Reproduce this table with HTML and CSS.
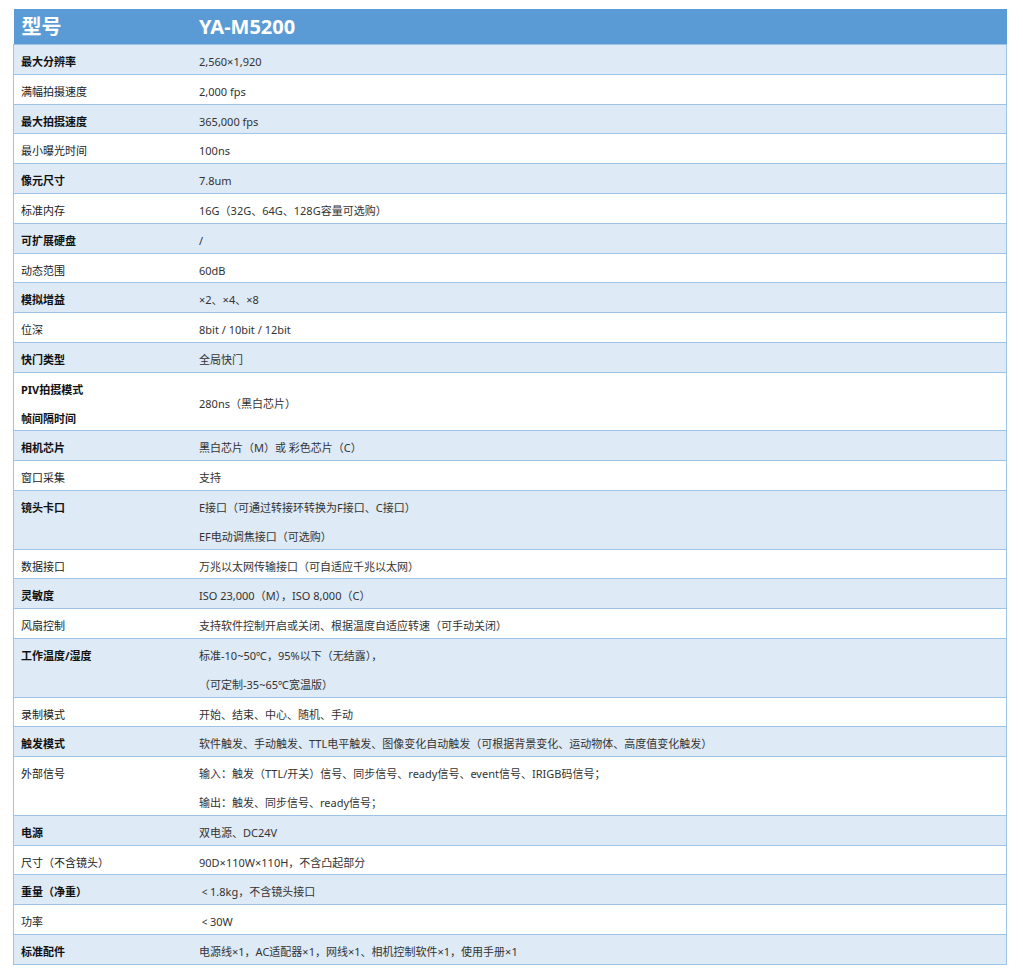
FILE: index.html
```html
<!DOCTYPE html>
<html lang="zh-CN">
<head>
<meta charset="utf-8">
<title>YA-M5200</title>
<link rel="stylesheet" href="styles.css">
</head>
<body>
<div class="page">
<table class="spec">
<thead>
<tr class="head"><th class="k">型号</th><th class="v">YA-M5200</th></tr>
</thead>
<tbody>
<tr class="alt"><td class="k b"><div class="c">最大分辨率</div></td><td class="v"><div class="c">2,560×1,920</div></td></tr>
<tr><td class="k"><div class="c">满幅拍摄速度</div></td><td class="v"><div class="c">2,000 fps</div></td></tr>
<tr class="alt"><td class="k b"><div class="c">最大拍摄速度</div></td><td class="v"><div class="c">365,000 fps</div></td></tr>
<tr><td class="k"><div class="c">最小曝光时间</div></td><td class="v"><div class="c">100ns</div></td></tr>
<tr class="alt"><td class="k b"><div class="c">像元尺寸</div></td><td class="v"><div class="c">7.8um</div></td></tr>
<tr><td class="k"><div class="c">标准内存</div></td><td class="v"><div class="c">16G（32G、64G、128G容量可选购）</div></td></tr>
<tr class="alt"><td class="k b"><div class="c">可扩展硬盘</div></td><td class="v"><div class="c">/</div></td></tr>
<tr><td class="k"><div class="c">动态范围</div></td><td class="v"><div class="c">60dB</div></td></tr>
<tr class="alt"><td class="k b"><div class="c">模拟增益</div></td><td class="v"><div class="c">×2、×4、×8</div></td></tr>
<tr><td class="k"><div class="c">位深</div></td><td class="v"><div class="c">8bit / 10bit / 12bit</div></td></tr>
<tr class="alt"><td class="k b"><div class="c">快门类型</div></td><td class="v"><div class="c">全局快门</div></td></tr>
<tr><td class="k b"><div class="c">PIV拍摄模式<br>帧间隔时间</div></td><td class="v"><div class="c">280ns（黑白芯片）</div></td></tr>
<tr class="alt"><td class="k b"><div class="c">相机芯片</div></td><td class="v"><div class="c">黑白芯片（M）或 彩色芯片（C）</div></td></tr>
<tr><td class="k"><div class="c">窗口采集</div></td><td class="v"><div class="c">支持</div></td></tr>
<tr class="alt"><td class="k b"><div class="c">镜头卡口</div></td><td class="v"><div class="c">E接口（可通过转接环转换为F接口、C接口）<br>EF电动调焦接口（可选购）</div></td></tr>
<tr><td class="k"><div class="c">数据接口</div></td><td class="v"><div class="c">万兆以太网传输接口（可自适应千兆以太网）</div></td></tr>
<tr class="alt"><td class="k b"><div class="c">灵敏度</div></td><td class="v"><div class="c">ISO 23,000（M），ISO 8,000（C）</div></td></tr>
<tr><td class="k"><div class="c">风扇控制</div></td><td class="v"><div class="c">支持软件控制开启或关闭、根据温度自适应转速（可手动关闭）</div></td></tr>
<tr class="alt"><td class="k b"><div class="c">工作温度/湿度</div></td><td class="v"><div class="c">标准-10~50℃，95%以下（无结露），<br>（可定制-35~65℃宽温版）</div></td></tr>
<tr><td class="k"><div class="c">录制模式</div></td><td class="v"><div class="c">开始、结束、中心、随机、手动</div></td></tr>
<tr class="alt"><td class="k b"><div class="c">触发模式</div></td><td class="v"><div class="c">软件触发、手动触发、TTL电平触发、图像变化自动触发（可根据背景变化、运动物体、高度值变化触发）</div></td></tr>
<tr><td class="k"><div class="c">外部信号</div></td><td class="v"><div class="c">输入：触发（TTL/开关）信号、同步信号、ready信号、event信号、IRIGB码信号；<br>输出：触发、同步信号、ready信号；</div></td></tr>
<tr class="alt"><td class="k b"><div class="c">电源</div></td><td class="v"><div class="c">双电源、DC24V</div></td></tr>
<tr><td class="k"><div class="c">尺寸（不含镜头）</div></td><td class="v"><div class="c">90D×110W×110H，不含凸起部分</div></td></tr>
<tr class="alt"><td class="k b"><div class="c">重量（净重）</div></td><td class="v"><div class="c"><span class="lt">&lt;</span>1.8kg，不含镜头接口</div></td></tr>
<tr><td class="k"><div class="c">功率</div></td><td class="v"><div class="c"><span class="lt">&lt;</span>30W</div></td></tr>
<tr class="alt"><td class="k b"><div class="c">标准配件</div></td><td class="v"><div class="c">电源线×1，AC适配器×1，网线×1、相机控制软件×1，使用手册×1</div></td></tr>
</tbody>
</table>
</div>
</body>
</html>
```
FILE: styles.css
```css
html, body {
  margin: 0;
  padding: 0;
  background: #ffffff;
}
.page {
  padding: 9px 16px 0 13px;
}
.spec {
  width: 994px;
  border-collapse: collapse;
  font-family: "Noto Sans", "Noto Sans CJK SC", sans-serif;
  font-size: 11px;
  color: #333333;
}
.spec th {
  background: #5b9bd5;
  color: #ffffff;
  font-size: 20px;
  font-weight: 700;
  text-align: left;
  height: 35px;
  padding: 0;
  vertical-align: middle;
  line-height: 35px;
}
.spec th.k { padding-left: 8px; }
.spec td {
  border-top: 1px solid #9dc3e6;
  line-height: 28.8px;
  padding: 0;
}
.spec .c {
  padding-top: 3px;
  margin-bottom: -3px;
}
.spec tbody tr:last-child td {
  border-bottom: 1px solid #9dc3e6;
}
.spec td.k {
  width: 178px;
  padding-left: 7px;
  vertical-align: top;
  border-left: 1px solid #9dc3e6;
  color: #222222;
}
.spec td.v {
  vertical-align: middle;
  border-right: 1px solid #9dc3e6;
}
.spec td.b {
  font-weight: 700;
  color: #111111;
}
.spec tr.alt td {
  background: #deeaf6;
}
.lt {
  display: inline-block;
  width: 11px;
  text-align: center;
  font-size: 10px;
}
```
